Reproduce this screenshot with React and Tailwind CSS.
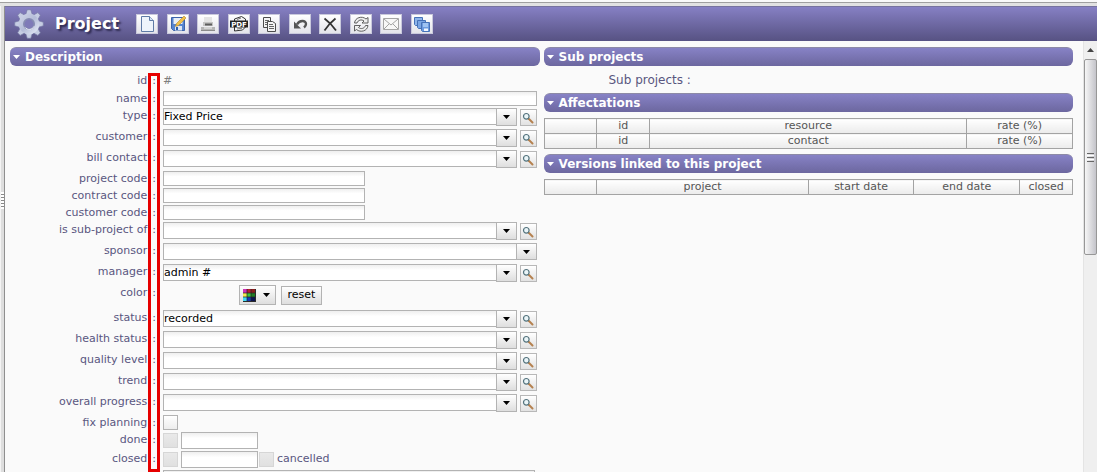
const GEAR_TEETH = [0, 45, 90, 135, 180, 225, 270, 315]

const lookups = {
  type: { label: "type", value: "Fixed Price" },
  customer: { label: "customer" },
  billContact: { label: "bill contact" },
  parent: { label: "is sub-project of" },
  sponsor: { label: "sponsor", search: false },
  manager: { label: "manager", value: "admin #" },
  status: { label: "status", value: "recorded" },
  health: { label: "health status" },
  quality: { label: "quality level" },
  trend: { label: "trend" },
  progress: { label: "overall progress" },
}

function GearIcon() {
  return (
    <svg className="w-8 h-8" viewBox="-16 -16 32 32" aria-hidden="true">
      <defs>
        <linearGradient id="gear" x1="0" y1="0" x2="1" y2="1">
          <stop offset="0" stopColor="#c9cfe4" />
          <stop offset="0.5" stopColor="#b4bcd8" />
          <stop offset="1" stopColor="#dde3f2" />
        </linearGradient>
      </defs>
      {GEAR_TEETH.map((angle) => (
        <path
          key={angle}
          d="M-3.4 -9 L-1.8 -14.3 H1.8 L3.4 -9 Z"
          fill="#c6cde3"
          stroke="#777aa6"
          strokeWidth="0.7"
          transform={`rotate(${angle})`}
        />
      ))}
      <circle r="7.6" fill="none" stroke="url(#gear)" strokeWidth="5.6" />
      <circle r="5.2" fill="#7f7bb8" stroke="#868cb2" strokeWidth="1.6" />
      <path d="M-4 3.400a5.300 5.300 0 0 0 9-1" fill="none" stroke="#eef1fa" />
    </svg>
  )
}

function Icon({ children }) {
  return (
    <svg className="w-[18px] h-[18px]" viewBox="0 0 18 18" fill="none" aria-hidden="true">
      {children}
    </svg>
  )
}

const toolbar = [
  {
    name: "New",
    icon: (
      <Icon>
        <path d="M3.500 1.500h8l4 4v11h-12z" fill="#eef4fb" stroke="#5f7ba6" />
        <path d="M11.500 1.500v4h4" fill="#d5e2f5" stroke="#5f7ba6" />
      </Icon>
    ),
  },
  {
    name: "Save",
    icon: (
      <Icon>
        <path d="M2.500 2.500h13v13h-11l-2-2z" fill="#5584cf" stroke="#3c63aa" />
        <path d="M4.500 3h9v6h-9z" fill="#e8eef5" />
        <path d="M6 11h7v4.500H6z" fill="#dde6f3" />
        <path d="M7 12h2v3H7z" fill="#2f5fae" />
        <path d="M15 1l2 2-7.500 7.500-3 1 1-3z" fill="#efc04a" stroke="#b98a2c" strokeWidth="0.6" />
      </Icon>
    ),
  },
  {
    name: "Print",
    icon: (
      <Icon>
        <path d="M5 2h8v7H5z" fill="#e4e4e4" />
        <path d="M4 7h10v4H4z" fill="#c4c4c4" />
        <path d="M6 8.500h7v2H6z" fill="#5d5d5d" />
        <path d="M2 12h14v3.500H2z" fill="#b5b5b5" />
        <path d="M2 15h14v1H2z" fill="#8b8b8b" />
        <path d="M5 13h8" stroke="#f3f3f3" />
      </Icon>
    ),
  },
  {
    name: "Export to PDF",
    icon: (
      <Icon>
        <path d="M4.500 6V4l7-2.500 4 2.500v3M4.500 12v4l8-1 3-3" fill="#f4f4f4" stroke="#333" />
        <path d="M7 4.500l4-1.500M7 14l5-.8" stroke="#777" />
        <path d="M0 5.500h18v7H0z" fill="#222" />
        <text x="9" y="11.500" textAnchor="middle" fontSize="7" fontWeight="bold" fill="#fff" fontFamily="DejaVu Sans, sans-serif">
          PDF
        </text>
      </Icon>
    ),
  },
  {
    name: "Copy",
    icon: (
      <Icon>
        <path d="M3.500 2.500h7v10h-7z" fill="#f4f4f4" stroke="#4c4c4c" />
        <path d="M5 5.500h4M5 7.500h3M5 9.500h3" stroke="#666" />
        <path d="M7.500 6.500h5l3 2v8h-8z" fill="#f4f4f4" stroke="#4c4c4c" />
        <path d="M9 9.500h4M9 11.500h5M9 13.500h5" stroke="#666" />
      </Icon>
    ),
  },
  {
    name: "Undo",
    icon: (
      <Icon>
        <path d="M6 9.500C8.500 5 15 5 15 9c0 1.500-.8 2.500-2 3.500" stroke="#555" strokeWidth="2.400" />
        <path d="M3 6.500v7h7z" fill="#555" />
      </Icon>
    ),
  },
  {
    name: "Delete",
    icon: (
      <Icon>
        <path d="M3.500 3.500c4 3 8 7 11.500 12" stroke="#333" strokeWidth="1.800" />
        <path d="M14.500 3.500C10 7 6.500 11 3.500 15.500" stroke="#333" strokeWidth="1.800" />
      </Icon>
    ),
  },
  {
    name: "Refresh",
    icon: (
      <Icon>
        <path d="M2.500 8c.5-5.500 7.500-7.500 11.500-4l2-1.500v5.500h-6l2-2C9.500 4 6 5 5 8z" fill="#eee" stroke="#505050" strokeWidth="0.9" />
        <path d="M16 10.500c-.5 5.500-7.500 7.500-11.500 4l-2 1.500v-5.500h6l-2 2c2.500 2 6 1 7-2z" fill="#eee" stroke="#505050" strokeWidth="0.9" />
      </Icon>
    ),
  },
  {
    name: "Send by mail",
    icon: (
      <Icon>
        <path d="M1.500 3.500h15v11h-15z" fill="#f7f7f7" stroke="#a5a5a5" />
        <path d="M2 4l7 6 7-6M2 14l5-5M16 14l-5-5" stroke="#999" strokeWidth="0.9" />
      </Icon>
    ),
  },
  {
    name: "Multiple update",
    icon: (
      <Icon>
        <path d="M1.500 2.500h8v8h-7l-1-1z" fill="#8fb5ea" stroke="#4672b8" />
        <path d="M4.500 5.500h8v8h-7l-1-1z" fill="#7ca6e4" stroke="#4672b8" />
        <path d="M8.500 7.500h8v9h-7l-1-1z" fill="#6d9be0" stroke="#4672b8" />
        <path d="M10 8h5v4h-5z" fill="#9fc3f2" />
        <path d="M11 13.500h4V16h-4z" fill="#f1f6ff" />
      </Icon>
    ),
  },
]

function Header() {
  return (
    <header className="flex items-center h-[35px] pl-2 border-t border-[#77739f] bg-linear-to-b from-[#8680c4] to-[#575283]">
      <GearIcon />
      <h1 className="w-[91px] pl-[10px] text-base font-bold text-white [text-shadow:2px_2px_2px_#2e2b50]">Project</h1>
      <div className="flex justify-between w-[297px]">
        {toolbar.map((item) => (
          <button
            key={item.name}
            type="button"
            aria-label={item.name}
            className="flex items-center justify-center w-[22px] h-5 bg-linear-to-b from-white to-[#e4e4ea] border border-[#c9c9dc]"
          >
            {item.icon}
          </button>
        ))}
      </div>
    </header>
  )
}

function SectionTitle({ children }) {
  return (
    <h2 className="h-[19px] rounded-md border-t border-[#8d8aa6] bg-linear-to-b from-[#8782c6] to-[#6c679f] text-xs font-bold text-white [text-shadow:1px_1px_1px_#4a4672]">
      <button type="button" className="flex items-center gap-[5px] w-full h-full pl-[3px] text-left">
        <svg className="w-[7px] h-1" viewBox="0 0 7 4" aria-hidden="true">
          <path d="M0 0h7L3.500 4z" fill="#fff" />
        </svg>
        {children}
      </button>
    </h2>
  )
}

const rowStyle = "grid grid-cols-[146px_1fr] gap-[7px] items-start pr-[3px]"
const labelStyle = "flex justify-end gap-[5px] text-[#59567f] leading-[15px] whitespace-nowrap"

function Row({ label, id, className = "h-[17px]", children }) {
  return (
    <div className={`${rowStyle} ${className}`}>
      <label htmlFor={id} className={labelStyle}>
        {label}
        <span>:</span>
      </label>
      {children}
    </div>
  )
}

const fieldStyle = "border border-[#b3b3b3] bg-white bg-linear-to-b from-[#efefef] to-white to-35%"

function TextRow({ id, label, className }) {
  return (
    <Row label={label} id={id}>
      <input id={id} type="text" className={`h-[15px] px-px text-black ${fieldStyle} ${className}`} />
    </Row>
  )
}

function Arrow() {
  return (
    <svg className="w-[7px] h-1" viewBox="0 0 7 4" aria-hidden="true">
      <path d="M0 0h7L3.500 4z" fill="#000" />
    </svg>
  )
}

function SearchButton({ label }) {
  return (
    <button
      type="button"
      aria-label={`Search ${label}`}
      className="flex items-center justify-center w-[17px] h-[17px] mt-px border border-[#b8b8b8] bg-linear-to-b from-white to-[#e2e2e2]"
    >
      <svg className="w-3 h-3" viewBox="0 0 12 12" fill="none" aria-hidden="true">
        <path d="M6.500 6.500l4 4" stroke="#b5814f" strokeWidth="2" strokeLinecap="round" />
        <circle cx="4.300" cy="4.300" r="2.800" fill="#eaf5f8" stroke="#53727c" strokeWidth="1.200" />
      </svg>
    </button>
  )
}

function ComboRow({ id }) {
  const { label, value = "", search = true } = lookups[id]
  return (
    <Row label={label} id={id} className="h-[21px]">
      <div className="flex gap-[3px]">
        <div className="relative flex-1">
          <select
            id={id}
            defaultValue={value}
            className={`block w-full h-[17px] pl-0 pr-5 appearance-none text-black ${fieldStyle}`}
          >
            <option value={value}>{value}</option>
          </select>
          <span className="absolute inset-y-0 right-0 flex items-center justify-center w-[21px] border border-[#b3b3b3] bg-linear-to-b from-white to-[#dedede] pointer-events-none">
            <Arrow />
          </span>
        </div>
        {search && <SearchButton label={label} />}
      </div>
    </Row>
  )
}

function Checkbox({ id, disabled }) {
  return (
    <input
      id={id}
      type="checkbox"
      disabled={disabled}
      className="appearance-none shrink-0 w-[15px] h-[15px] border border-[#b3b3b3] bg-linear-to-b from-white to-[#ededed] disabled:border-[#d6d6d6] disabled:from-[#e9e9e9] disabled:to-[#e0e0e0]"
    />
  )
}

function DateInput({ label }) {
  return <input type="text" aria-label={label} className={`w-[77px] h-[17px] px-px text-black ${fieldStyle}`} />
}

const SWATCHES = ["#d030b8", "#b3202c", "#8a1c1c", "#f0e850", "#38c43c", "#1f7b23", "#3fd8f0", "#1438b8", "#0a1450"]

function ColorRow() {
  return (
    <Row label="color" id="color" className="h-[25px]">
      <div className="flex items-start gap-[5px] pl-[76px]">
        <button
          id="color"
          type="button"
          className="flex items-center gap-[7px] w-[37px] h-5 pl-[3px] border border-[#b3b3b3] bg-linear-to-b from-white to-[#dedede]"
        >
          <svg className="w-[13px] h-[13px]" viewBox="0 0 13 13" aria-hidden="true">
            <path d="M0 0h13v13H0z" fill="#2b2b2b" />
            {SWATCHES.map((fill, i) => (
              <rect key={fill} x={(i % 3) * 4} y={Math.floor(i / 3) * 4} width="4" height="4" fill={fill} />
            ))}
            <path d="M4 0v12M8 0v12M0 4h12M0 8h12" stroke="#222" strokeWidth="0.7" />
          </svg>
          <Arrow />
        </button>
        <button
          type="button"
          className="w-[41px] h-[19px] mt-px border border-[#b3b3b3] bg-linear-to-b from-white to-[#dedede] text-black"
        >
          reset
        </button>
      </div>
    </Row>
  )
}

function Description() {
  return (
    <section>
      <SectionTitle>Description</SectionTitle>
      <form className="relative pt-[7px]">
        <div className={`${rowStyle} h-[18px]`}>
          <span className={labelStyle}>
            id
            <span>:</span>
          </span>
          <span className="text-[#7d7d7d] leading-[15px]">#</span>
        </div>
        <TextRow id="name" label="name" className="w-full" />
        <ComboRow id="type" />
        <ComboRow id="customer" />
        <ComboRow id="billContact" />
        <TextRow id="projectCode" label="project code" className="w-[202px]" />
        <TextRow id="contractCode" label="contract code" className="w-[202px]" />
        <TextRow id="customerCode" label="customer code" className="w-[202px]" />
        <ComboRow id="parent" />
        <ComboRow id="sponsor" />
        <ComboRow id="manager" />
        <ColorRow />
        <ComboRow id="status" />
        <ComboRow id="health" />
        <ComboRow id="quality" />
        <ComboRow id="trend" />
        <ComboRow id="progress" />
        <Row label="fix planning" id="fixPlanning">
          <Checkbox id="fixPlanning" />
        </Row>
        <Row label="done" id="done" className="h-[19px]">
          <div className="flex items-center gap-[3px]">
            <Checkbox id="done" disabled />
            <DateInput label="done date" />
          </div>
        </Row>
        <Row label="closed" id="closed" className="h-[19px]">
          <div className="flex items-center gap-[3px]">
            <Checkbox id="closed" disabled />
            <div className="flex items-center gap-px">
              <DateInput label="closed date" />
              <Checkbox id="cancelled" disabled />
            </div>
            <label htmlFor="cancelled" className="text-[#59567f]">cancelled</label>
          </div>
        </Row>
        <div className="pl-[153px] pr-[5px]">
          <textarea aria-label="description" className={`block w-full h-16 resize-none ${fieldStyle}`} />
        </div>
        {/* highlight around the colons */}
        <div className="absolute top-[7px] left-[138px] w-3 h-[399px] border-3 border-[#e60000] pointer-events-none" />
      </form>
    </section>
  )
}

function HeadTable({ rows, widths }) {
  return (
    <table className="w-full mt-[6px] table-fixed border-collapse text-[#555]">
      <colgroup>
        {widths.map((width, i) => (
          <col key={i} className={width} />
        ))}
      </colgroup>
      <thead>
        {rows.map((cells, r) => (
          <tr key={r} className="h-[15px]">
            {cells.map((cell, c) => (
              <th key={c} className="p-0 border border-[#a3a3a3] bg-linear-to-b from-white to-[#ebebeb] font-normal leading-[14px]">
                {cell}
              </th>
            ))}
          </tr>
        ))}
      </thead>
    </table>
  )
}

function Links() {
  return (
    <div>
      <section>
        <SectionTitle>Sub projects</SectionTitle>
        <p className="pt-[7px] pl-[65px] h-[27px] text-xs leading-[15px] text-[#59567f]">Sub projects :</p>
      </section>
      <section>
        <SectionTitle>Affectations</SectionTitle>
        <HeadTable
          widths={["w-[10%]", "w-[10%]", "w-[60%]", "w-[20%]"]}
          rows={[
            ["", "id", "resource", "rate (%)"],
            ["", "id", "contact", "rate (%)"],
          ]}
        />
      </section>
      <section className="mt-[5px]">
        <SectionTitle>Versions linked to this project</SectionTitle>
        <HeadTable
          widths={["w-[10%]", "w-[40%]", "w-[20%]", "w-[20%]", "w-[10%]"]}
          rows={[["", "project", "start date", "end date", "closed"]]}
        />
      </section>
    </div>
  )
}

function Scrollbar() {
  return (
    <div className="shrink-0 w-[14px] bg-[#efefef] border-l border-[#e4e4e4]" aria-hidden="true">
      <div className="flex items-center justify-center h-[18px]">
        <svg className="w-[7px] h-1" viewBox="0 0 7 4">
          <path d="M3.500 0L7 4H0z" fill="#444" />
        </svg>
      </div>
      <div className="flex flex-col items-center justify-center gap-px h-[196px] rounded-xs border border-[#979797] bg-linear-to-r from-[#f6f6f6] to-[#c4c4ca]">
        <span className="w-[7px] h-px bg-[#666]" />
        <span className="w-[7px] h-px bg-white" />
        <span className="w-[7px] h-px bg-[#666]" />
        <span className="w-[7px] h-px bg-white" />
        <span className="w-[7px] h-px bg-[#666]" />
      </div>
    </div>
  )
}

function Splitter() {
  return (
    <div className="shrink-0 w-[5px] pt-[186px] bg-[#dedede] border-l border-r border-l-[#f4f4f4] border-r-[#8f8f8f]" aria-hidden="true">
      <div className="flex flex-col gap-[2px] py-[2px] bg-white">
        <span className="h-px bg-[#8a8a8a]" />
        <span className="h-px bg-[#8a8a8a]" />
        <span className="h-px bg-[#8a8a8a]" />
        <span className="h-px bg-[#8a8a8a]" />
        <span className="h-px bg-[#8a8a8a]" />
      </div>
    </div>
  )
}

export default function App() {
  return (
    <div className="flex flex-col h-screen overflow-hidden bg-[#fafafa] font-['DejaVu_Sans',Verdana,sans-serif] text-[11px]">
      <div className="shrink-0 h-[6px] bg-[#e2e2e2] border-t-2 border-[#fafafa]">
        <div className="h-px bg-[#a0a0a0]" />
      </div>
      <div className="flex flex-1 min-h-0">
        <Splitter />
        <div className="flex flex-col flex-1 min-w-0">
          <Header />
          <div className="flex flex-1 min-h-0">
            <main className="grid grid-cols-2 gap-1 flex-1 min-w-0 pt-[6px] pl-[5px] pr-[10px] overflow-hidden">
              <Description />
              <Links />
            </main>
            <Scrollbar />
          </div>
        </div>
      </div>
    </div>
  )
}
